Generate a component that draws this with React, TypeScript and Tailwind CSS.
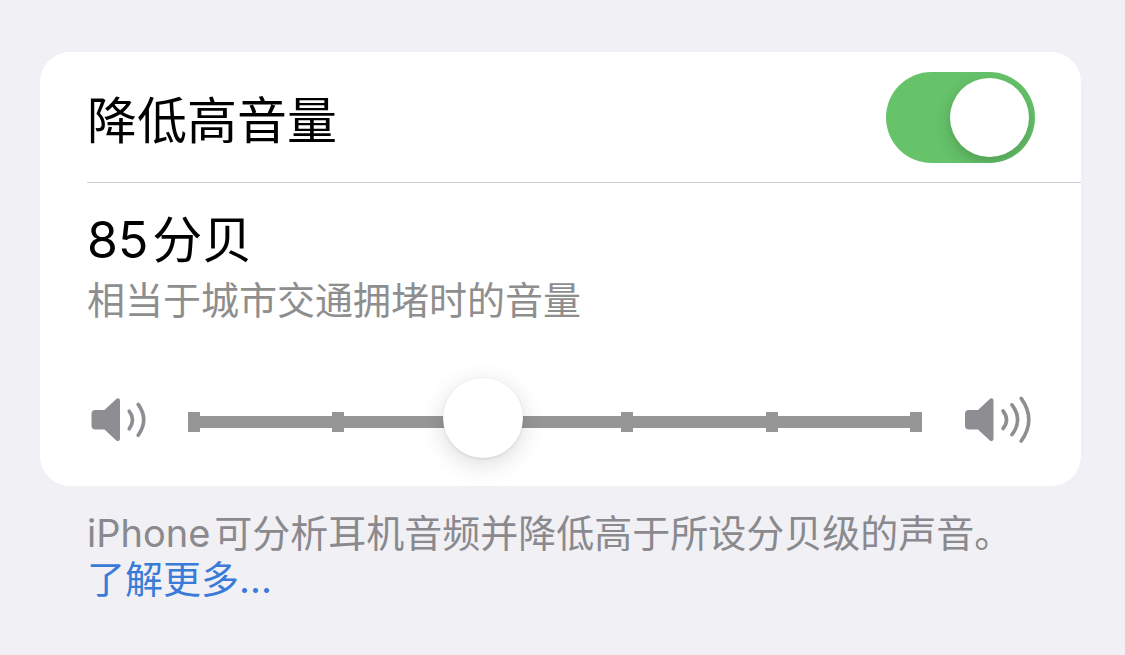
import { useState } from "react";

const TICKS = [0, 1, 2, 3, 4, 5];

const SPEAKER_BODY =
  "M8.5 16H17.5L29 5.2Q30.6 3.8 32 4.6Q33 5.2 33 7V44.5Q33 46.3 32 46.8Q30.6 47.6 29 46.2L17.5 35.4H8.5Q4.5 35.4 4.5 31.4V20Q4.5 16 8.5 16Z";

function QuietSpeaker() {
  return (
    <svg className="h-[52px] w-[60px] shrink-0 text-[#8e8e92]" viewBox="0 0 60 52" fill="none" aria-hidden="true">
      <path d={SPEAKER_BODY} fill="currentColor" />
      <g stroke="currentColor" strokeWidth="3.6" strokeLinecap="round">
        <path d="M42.2 17.2Q48.8 25.9 42.2 34.9" />
        <path d="M51.2 10.4Q62.2 25.9 51.2 41.2" />
      </g>
    </svg>
  );
}

function LoudSpeaker() {
  return (
    <svg className="h-[52px] w-[72px] shrink-0 text-[#8e8e92]" viewBox="0 0 72 52" fill="none" aria-hidden="true">
      <path d={SPEAKER_BODY} fill="currentColor" transform="translate(-2.5 0)" />
      <g stroke="currentColor" strokeWidth="3.6" strokeLinecap="round">
        <path d="M40 16.8Q47 25.7 40 34.6" />
        <path d="M49 10.8Q60.2 25.7 49 40.6" />
        <path d="M58.2 4.4Q73.4 25.7 58.2 47" />
      </g>
    </svg>
  );
}

export default function App() {
  const [enabled, setEnabled] = useState(true);
  const [level, setLevel] = useState(2);

  return (
    <main className="min-h-screen bg-[#f0f0f5] pt-[52px] pr-11 pb-12 pl-10 font-['Inter','Noto_Sans_CJK_SC',sans-serif]">
      <section className="overflow-hidden rounded-[30px] bg-white">
        <div className="ml-[47px] flex h-[131px] items-center justify-between border-b border-[#d0d0d3] pr-[46px]">
          <label htmlFor="reduce" className="pt-2 text-[50px] leading-[64px] text-black">
            降低高音量
          </label>
          <input
            id="reduce"
            type="checkbox"
            role="switch"
            checked={enabled}
            onChange={(e) => setEnabled(e.target.checked)}
            className="flex h-[91px] w-[149px] shrink-0 cursor-pointer appearance-none items-center overflow-hidden rounded-full bg-[#e9e9eb] px-[6px] before:size-[79px] before:rounded-full before:bg-white before:shadow-[0_6px_16px_rgba(0,0,0,0.2)] before:content-[''] checked:justify-end checked:bg-[#66c36a]"
          />
        </div>

        <div className="pt-[25px] pr-[46px] pb-10 pl-[47px]">
          <label htmlFor="level" className="flex gap-1 text-[50px] leading-[64px] text-black">
            <span>85</span>
            <span>分贝</span>
          </label>
          <p className="text-[38px] leading-[56px] text-[#8e8e8e]">相当于城市交通拥堵时的音量</p>

          <div className="mt-[66px] flex items-center gap-[41px]">
            <QuietSpeaker />
            <div className="relative flex h-[52px] flex-1 items-center pt-1">
              <div className="flex h-3 w-full items-center justify-between bg-[#969696]">
                {TICKS.map((t) => (
                  <span key={t} className="h-5 w-3 bg-[#969696]" />
                ))}
              </div>
              <input
                id="level"
                type="range"
                min={0}
                max={5}
                step={1}
                value={level}
                onChange={(e) => setLevel(Number(e.target.value))}
                className="absolute -inset-x-[34px] -top-4 h-20 cursor-pointer appearance-none bg-transparent [&::-webkit-slider-thumb]:size-20 [&::-webkit-slider-thumb]:appearance-none [&::-webkit-slider-thumb]:rounded-full [&::-webkit-slider-thumb]:bg-white [&::-webkit-slider-thumb]:shadow-[0_6px_24px_rgba(0,0,0,0.14),0_1px_3px_rgba(0,0,0,0.1)]"
              />
            </div>
            <LoudSpeaker />
          </div>
        </div>
      </section>

      <footer className="pt-6 pl-[47px] text-[38px] leading-[46px] text-[#89898e]">
        <p className="flex gap-1">
          <span>iPhone</span>
          <span>可分析耳机音频并降低高于所设分贝级的声音。</span>
        </p>
        <a href="#more" className="text-[#3b7bd8]">
          了解更多...
        </a>
      </footer>
    </main>
  );
}
